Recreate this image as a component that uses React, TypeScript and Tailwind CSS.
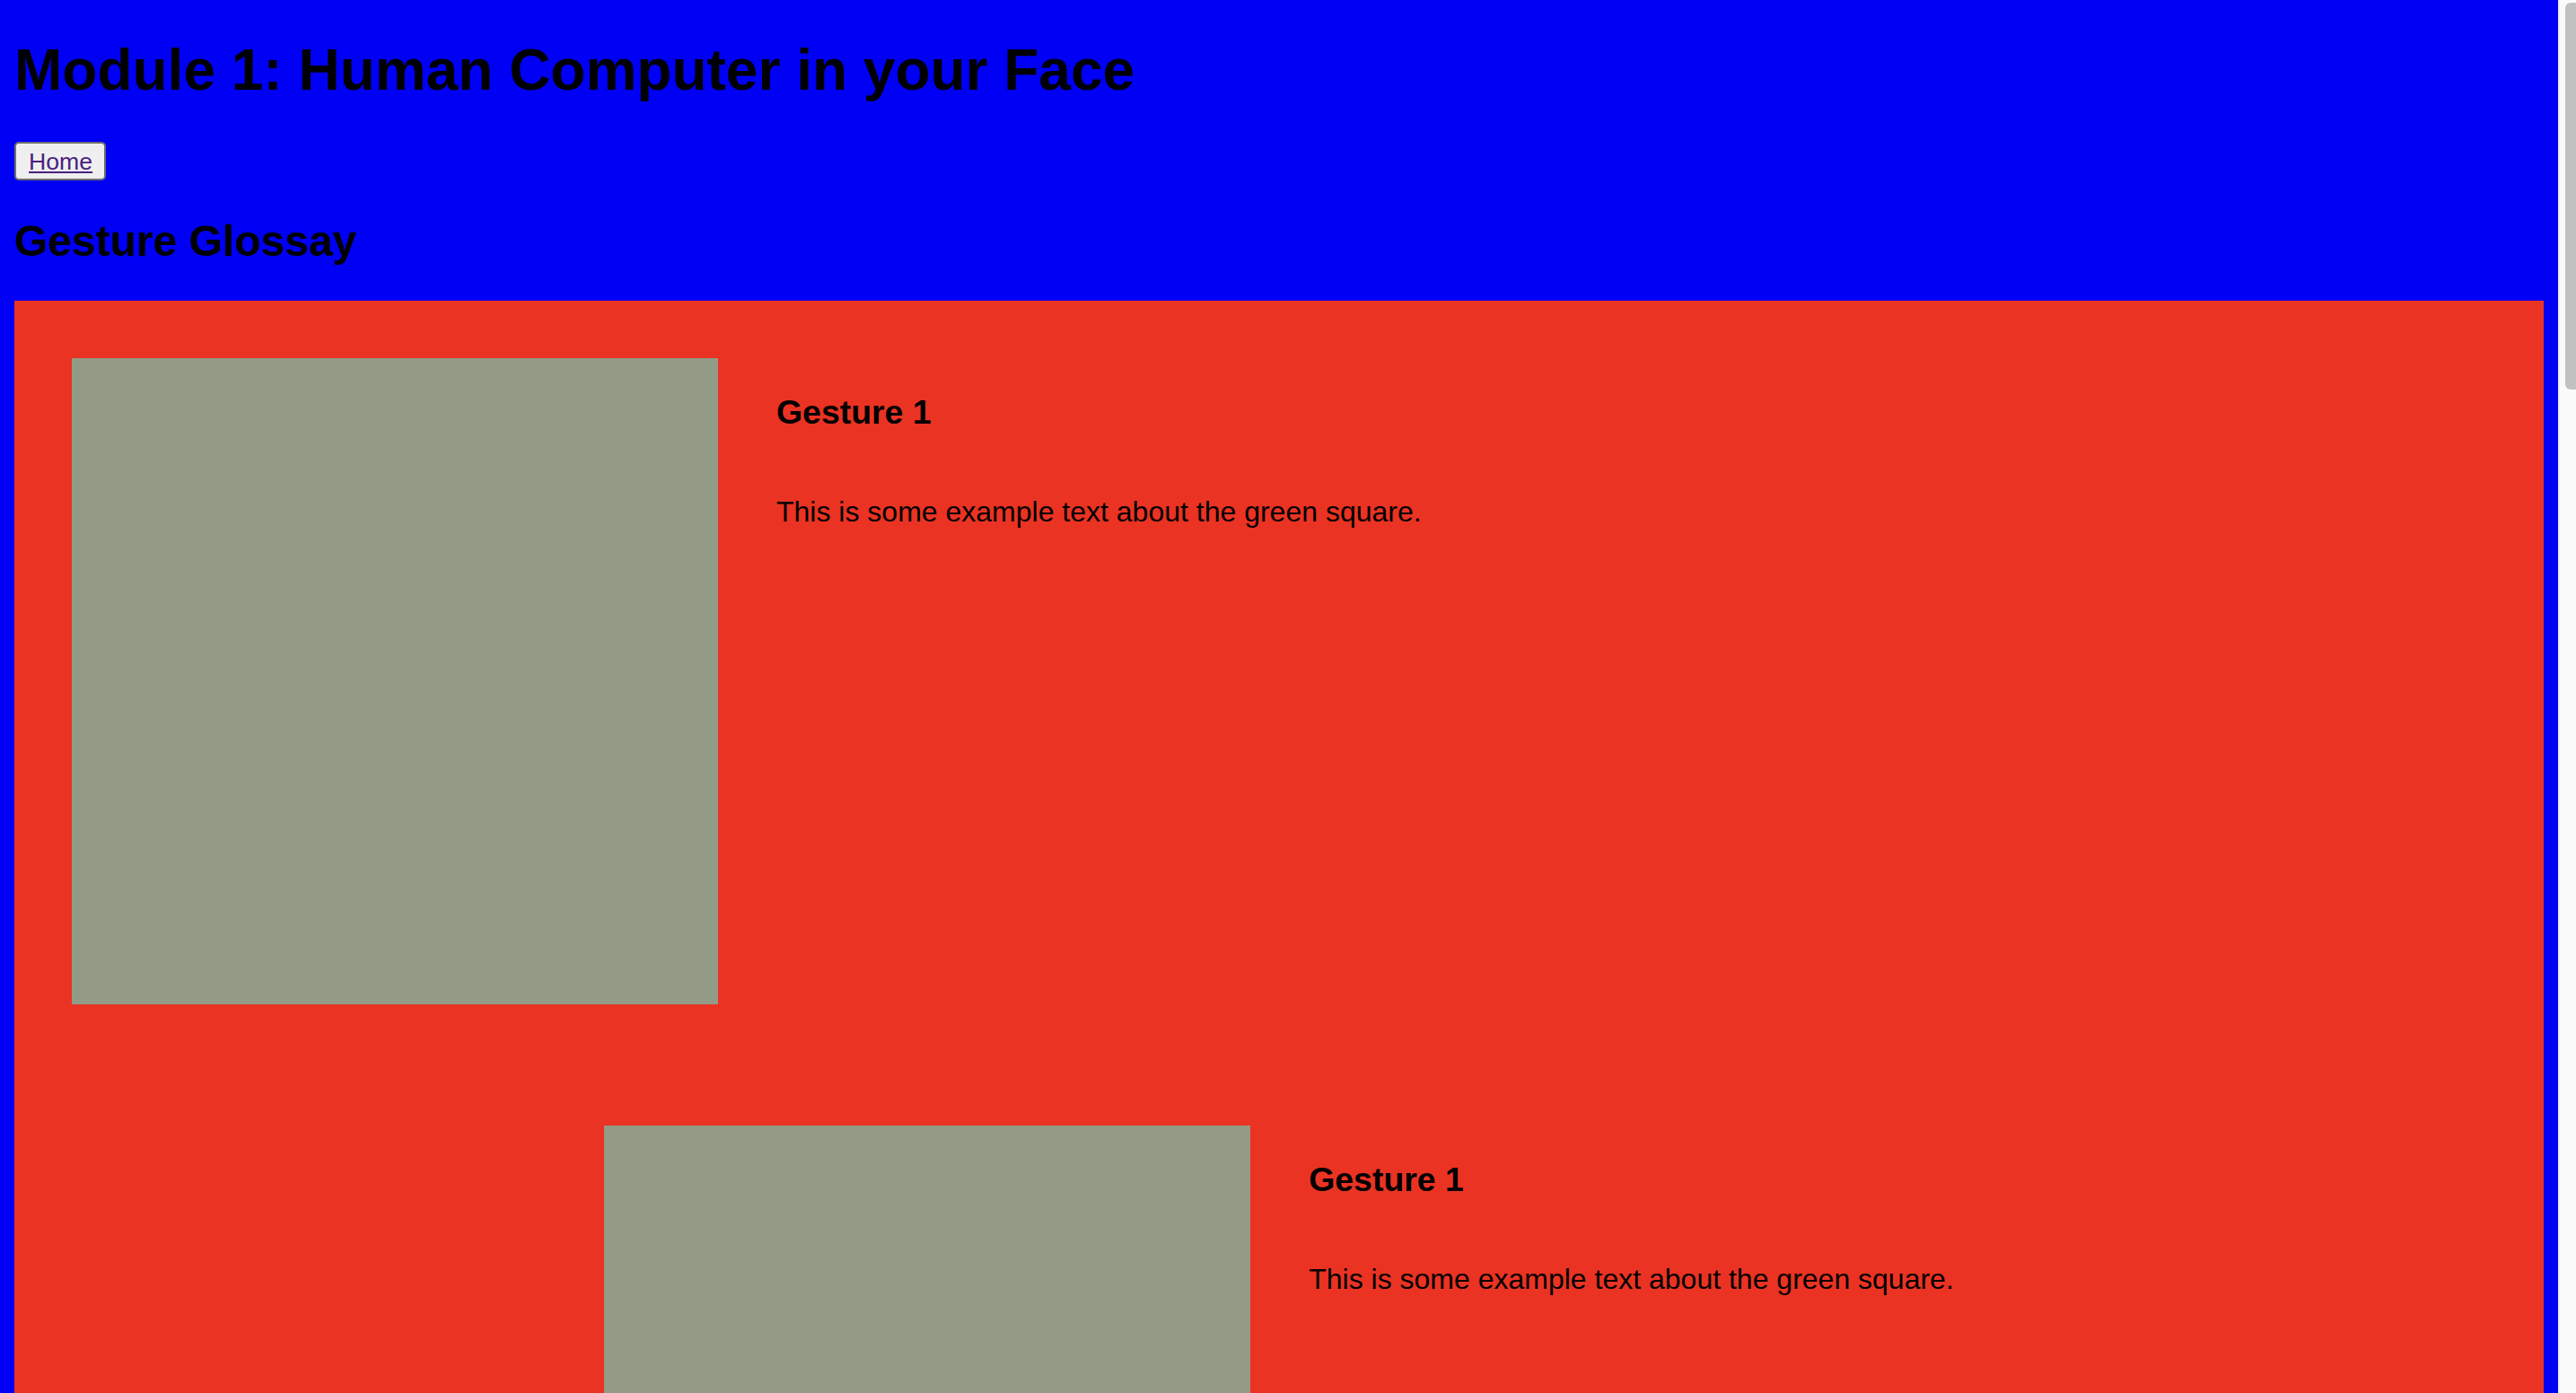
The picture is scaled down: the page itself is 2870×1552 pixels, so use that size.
import React from "react";

const Gesture = ({ className }: { className: string }) => {
  return (
    <div className={"flex " + className}>
      <div className="w-[720px] h-[720px] shrink-0 bg-[#939b87]" />
      <div className="flex flex-col ml-[65px]">
        <h3 className="mt-[39px] mb-[37px] text-[37.44px] font-bold leading-[43px]">Gesture 1</h3>
        <p className="mt-[34px] text-[32px] leading-[37px]">
          This is some example text about the green square.
        </p>
      </div>
    </div>
  );
};

const App = () => {
  return (
    <div className="flex h-[1552px] w-[2870px] overflow-hidden font-['Liberation_Sans',Arial,sans-serif] text-black">
      <div className="w-[2850px] bg-[#0000f5] px-[16px]">
        <h1 className="mt-[41px] text-[64px] font-bold leading-[74px]">
          Module 1: Human Computer in your Face
        </h1>
        <div className="mt-[43px] flex">
          <button className="flex h-[43px] w-[102px] items-center rounded-[5px] border-2 border-[#6e6e6e] bg-[#efefef] pl-[14px] text-[26.67px] text-[#4a2080] underline">
            Home
          </button>
        </div>
        <h2 className="mt-[40px] text-[48px] font-bold leading-[55px]">Gesture Glossay</h2>
        <div className="mt-[39px] flex flex-col bg-[#ea3323] pt-[64px] pb-[200px]">
          <Gesture className="pl-[64px]" />
          <Gesture className="mt-[135px] justify-center" />
        </div>
      </div>
      <div className="flex w-[20px] border-l-2 border-[#ececec] bg-[#fafafa] pl-[6px] pt-[3px]">
        <div className="h-[431px] w-full rounded-tl-[6px] rounded-bl-[6px] bg-[#c1c1c1]" />
      </div>
    </div>
  );
};

export default App;
